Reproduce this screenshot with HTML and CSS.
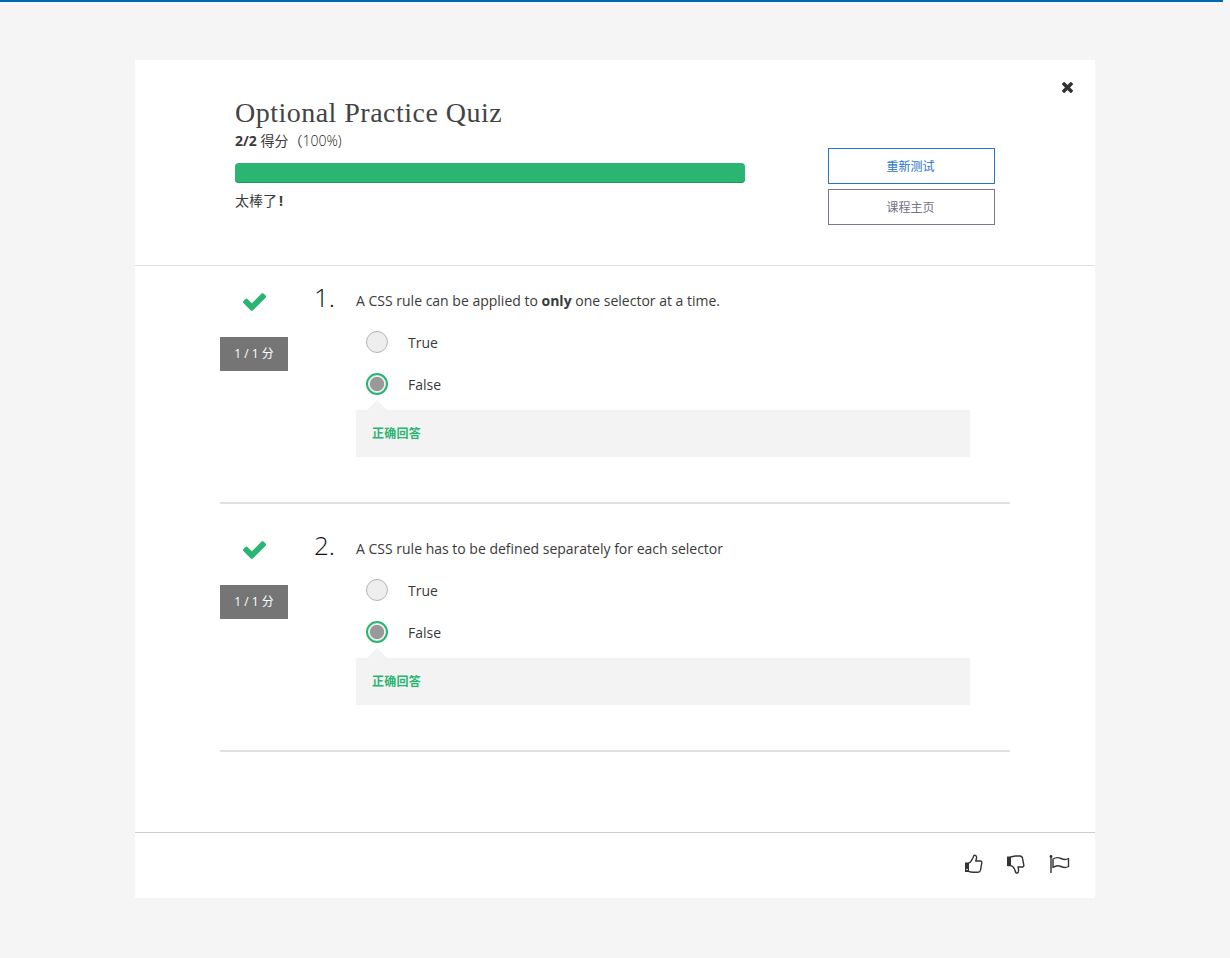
FILE: index.html
```html
<!DOCTYPE html>
<html lang="zh-CN">
<head>
<meta charset="utf-8">
<title>Optional Practice Quiz</title>
<link rel="stylesheet" href="styles.css">
</head>
<body>
<div class="progress-line"></div>
<main class="card">
  <header class="quiz-header">
    <div class="summary">
      <h1 class="title">Optional Practice Quiz</h1>
      <p class="score"><b>2/2</b> 得分（<span class="percent">100%)</span></p>
      <div class="bar"></div>
      <p class="praise">太棒了<span class="bang">!</span></p>
    </div>
    <div class="actions">
      <button class="btn btn-primary">重新测试</button>
      <button class="btn">课程主页</button>
    </div>
    <svg class="close" viewBox="302 302 1188 1188"><path d="M1490 1322q0 40-28 68l-136 136q-28 28-68 28t-68-28l-294-294-294 294q-28 28-68 28t-68-28l-136-136q-28-28-28-68t28-68l294-294-294-294q-28-28-28-68t28-68l136-136q28-28 68-28t68 28l294 294 294-294q28-28 68-28t68 28l136 136q28 28 28 68t-28 68l-294 294 294 294q28 28 28 68z" transform="translate(0 -64)"/></svg>
  </header>
  <div class="questions">
    <section class="question">
      <div class="status">
        <svg class="check" viewBox="121 334 1550 1188"><path d="M1671 566q0 40-28 68l-724 724-136 136q-28 28-68 28t-68-28l-136-136-362-362q-28-28-28-68t28-68l136-136q28-28 68-28t68 28l294 295 656-657q28-28 68-28t68 28l136 136q28 28 28 68z"/></svg>
        <div class="points">1 / 1 分</div>
      </div>
      <div class="number">1.</div>
      <div class="body">
        <p class="prompt">A CSS rule can be applied to <b>only</b> one selector at a time.</p>
        <div class="option"><span class="radio"></span><span>True</span></div>
        <div class="option"><span class="radio chosen"></span><span>False</span></div>
        <div class="feedback">正确回答</div>
      </div>
    </section>
    <section class="question">
      <div class="status">
        <svg class="check" viewBox="121 334 1550 1188"><path d="M1671 566q0 40-28 68l-724 724-136 136q-28 28-68 28t-68-28l-136-136-362-362q-28-28-28-68t28-68l136-136q28-28 68-28t68 28l294 295 656-657q28-28 68-28t68 28l136 136q28 28 28 68z"/></svg>
        <div class="points">1 / 1 分</div>
      </div>
      <div class="number">2.</div>
      <div class="body">
        <p class="prompt">A CSS rule has to be defined separately for each selector</p>
        <div class="option"><span class="radio"></span><span>True</span></div>
        <div class="option"><span class="radio chosen"></span><span>False</span></div>
        <div class="feedback">正确回答</div>
      </div>
    </section>
  </div>
  <footer class="quiz-footer">
    <svg class="icon" viewBox="0 0 20 20"><path class="solid" d="M1 8.500H5v9.500H1z"/><circle class="hole" cx="3" cy="15.500" r=".8"/><path d="M4.500 9.200C7 8.500 8.200 5.500 9.200 3.200Q9.700 1 11.200 1.300C13.500 2 12.500 5 11.700 7H16.500Q18.300 7.500 17.700 9.500L16.500 16.200Q16 18.300 14 18.300H9.500Q6.500 18 4.500 17.300H1.700"/></svg>
    <svg class="icon" viewBox="0 0 20 20"><path class="solid" d="M1 2.500H5V12H1z"/><path d="M1.700 11.600H4.500C7 12 8.500 14.500 9.200 17Q9.700 19.500 11.200 19C13.500 18.300 12.700 15.500 12 13H16.500Q18.300 12.500 17.700 10.500L16.500 4.300Q16 2 14 2H9.500Q6.500 2.300 4.500 3"/></svg>
    <svg class="icon flag" viewBox="0 0 22 20"><path d="M3 2.500V19M5 5Q9 2.500 13 4.500T20.500 4.500V12.500Q17 14.500 13 12.500T5 13.500z"/><circle class="solid" cx="3" cy="2.500" r="1.400"/></svg>
  </footer>
</main>
</body>
</html>
```
FILE: styles.css
```css
* { box-sizing: border-box; }
body {
  margin: 0;
  min-height: 958px;
  background: #f5f5f5;
  color: #3a3a3a;
  font: 400 14px/21px "Open Sans", "Noto Sans CJK SC", sans-serif;
}
h1, p { margin: 0; }
b { font-weight: 700; }
.progress-line { width: 1223px; height: 2px; background: #0067b4; }
.card {
  width: 960px;
  height: 838px;
  margin: 58px auto 0;
  background: #fff;
  display: flex;
  flex-direction: column;
}
.quiz-header {
  position: relative;
  display: flex;
  justify-content: space-between;
  height: 206px;
  padding: 36px 100px 0;
  border-bottom: 1px solid #e1e1e1;
}
.summary { width: 510px; }
.title {
  color: #444;
  font: 400 28px/34px "Liberation Serif", serif;
  letter-spacing: 0.480px;
  white-space: nowrap;
}
.score { white-space: nowrap; }
.percent { font-weight: 300; color: #222; }
.bar {
  height: 20px;
  margin: 12px 0 7px;
  border-radius: 4px;
  background: #2ab573;
  box-shadow: inset 0 -1px 0 #22945e;
}
.bang { font-weight: 700; margin-left: 2px; }
.actions {
  width: 167px;
  padding-top: 52px;
  display: flex;
  flex-direction: column;
  gap: 5px;
}
.btn {
  height: 36px;
  padding: 0 2px 0 0;
  border: 1px solid #7b788c;
  background: #fff;
  color: #757184;
  font: 400 12px/34px "Noto Sans CJK SC", sans-serif;
}
.btn-primary { border-color: #2a73cc; color: #2a73cc; }
.close { position: absolute; right: 22px; top: 22px; width: 11px; height: 11px; fill: #333; }
.questions { height: 566px; padding: 0 85px; }
.question { display: flex; height: 238px; border-bottom: 2px solid #e1e1e1; }
.question + .question { height: 248px; padding-top: 10px; }
.status { width: 68px; padding-top: 27px; }
.check { display: block; width: 23px; height: 18px; margin: 0 auto; fill: #2ab573; }
.points {
  height: 34px;
  margin-top: 26px;
  background: #757575;
  color: #fff;
  font-size: 12px;
  line-height: 34px;
  text-align: center;
}
.number { width: 68px; padding: 13px 21px 0 0; color: #111; font-weight: 300; font-size: 26px; line-height: 36px; text-align: right; }
.body { width: 614px; padding-top: 24px; }
.prompt { white-space: nowrap; }
.option { display: flex; align-items: center; height: 42px; gap: 20px; padding-left: 10px; }
.prompt + .option { margin-top: 10px; }
.radio { width: 22px; height: 22px; border: 1px solid #b5b5b5; border-radius: 50%; background: #eee; }
.chosen {
  border: 2px solid #2ab573;
  background: radial-gradient(circle, #999 6.700px, #eee 7.500px);
}
.feedback {
  position: relative;
  height: 47px;
  margin-top: 5px;
  padding-left: 16px;
  background: #f3f3f3;
  color: #2ab573;
  letter-spacing: 0.250px;
  font: 700 12px/45px "Noto Sans CJK SC", sans-serif;
}
.feedback::before {
  content: "";
  position: absolute;
  left: 11px;
  top: -10px;
  border: 10px solid transparent;
  border-top: 0;
  border-bottom-color: #f3f3f3;
}
.quiz-footer {
  height: 66px;
  padding: 21px 25px 0;
  border-top: 1px solid #ccc;
  display: flex;
  justify-content: flex-end;
  gap: 22px;
}
.icon { width: 20px; height: 20px; fill: none; stroke: #333; stroke-width: 1.400; stroke-linejoin: round; }
.flag { width: 22px; }
.icon .solid { fill: #333; stroke: none; }
.icon .hole { fill: #fff; stroke: none; }
```
